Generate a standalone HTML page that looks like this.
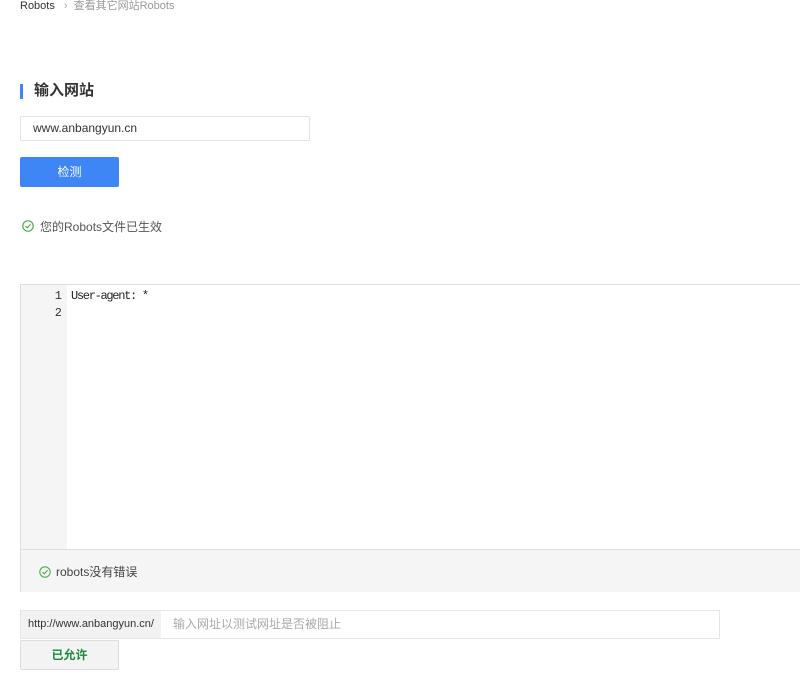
<!DOCTYPE html>
<html><head><meta charset="utf-8"><style>
body{margin:0;width:800px;height:676px;overflow:hidden;background:#fff;font-family:"Liberation Sans","Noto Sans CJK SC",sans-serif;color:#333;position:relative}
.a{position:absolute}
</style></head><body>
<div class="a" style="left:20px;top:0;font-size:11px;line-height:12px;color:#333">Robots <span style="color:#aaa;margin:0 6px">›</span><span style="color:#999">查看其它网站Robots</span></div>
<div class="a" style="left:20px;top:84px;width:3px;height:15px;background:#3e86f5"></div>
<div class="a" style="left:34px;top:81px;font-size:15px;font-weight:bold;line-height:20px;color:#333">输入网站</div>
<div class="a" style="left:20px;top:116px;height:23px;border:1px solid #e3e3e3;border-radius:2px;font-size:12px;line-height:23px;padding-left:12px;box-sizing:content-box;width:276px">www.anbangyun.cn</div>
<div class="a" style="left:20px;top:157px;width:99px;height:30px;background:#3e86f5;border-radius:2px;color:#fff;font-size:12px;line-height:30px;text-align:center">检测</div>
<svg class="a" style="left:22px;top:220px" width="12" height="12" viewBox="0 0 12 12"><circle cx="6" cy="6" r="5.2" fill="none" stroke="#4caf50" stroke-width="1.2"/><path d="M3.5 6.2L5.3 7.8L8.5 4.4" fill="none" stroke="#4caf50" stroke-width="1.2"/></svg>
<div class="a" style="left:40px;top:219px;font-size:12px;line-height:16px;color:#555">您的Robots文件已生效</div>
<div class="a" style="left:20px;top:284px;width:790px;height:308px;border:1px solid #ddd;box-sizing:border-box"></div>
<div class="a" style="left:21px;top:285px;width:46px;height:264px;background:#f5f5f5"></div>
<div class="a" style="left:21px;top:288px;width:41px;text-align:right;font-family:'Liberation Mono',monospace;font-size:12px;line-height:17px;color:#333">1<br>2</div>
<div class="a" style="left:71px;top:288px;font-family:'Liberation Mono',monospace;font-size:12px;letter-spacing:-1.3px;line-height:17px;color:#222">User-agent: *</div>
<div class="a" style="left:21px;top:549px;width:790px;height:42px;background:#f5f5f5;border-top:1px solid #ddd"></div>
<svg class="a" style="left:39px;top:566px" width="12" height="12" viewBox="0 0 12 12"><circle cx="6" cy="6" r="5.2" fill="none" stroke="#4caf50" stroke-width="1.1"/><path d="M3.5 6.2L5.3 7.8L8.5 4.4" fill="none" stroke="#4caf50" stroke-width="1.1"/></svg>
<div class="a" style="left:56px;top:564px;font-size:12px;line-height:16px;color:#444">robots没有错误</div>
<div class="a" style="left:20px;top:610px;width:700px;height:29px;border:1px solid #e6e6e6;box-sizing:border-box"></div>
<div class="a" style="left:21px;top:611px;width:140px;height:27px;background:#f2f2f2;font-size:11px;line-height:27px;text-align:center;color:#333">http://www.anbangyun.cn/</div>
<div class="a" style="left:173px;top:611px;font-size:12px;line-height:27px;color:#aaa">输入网址以测试网址是否被阻止</div>
<div class="a" style="left:20px;top:640px;width:99px;height:30px;background:#f3f3f3;border:1px solid #ddd;box-sizing:border-box;border-radius:2px;font-size:12px;font-weight:bold;line-height:28px;text-align:center;color:#1a8a3a">已允许</div>
</body></html>
